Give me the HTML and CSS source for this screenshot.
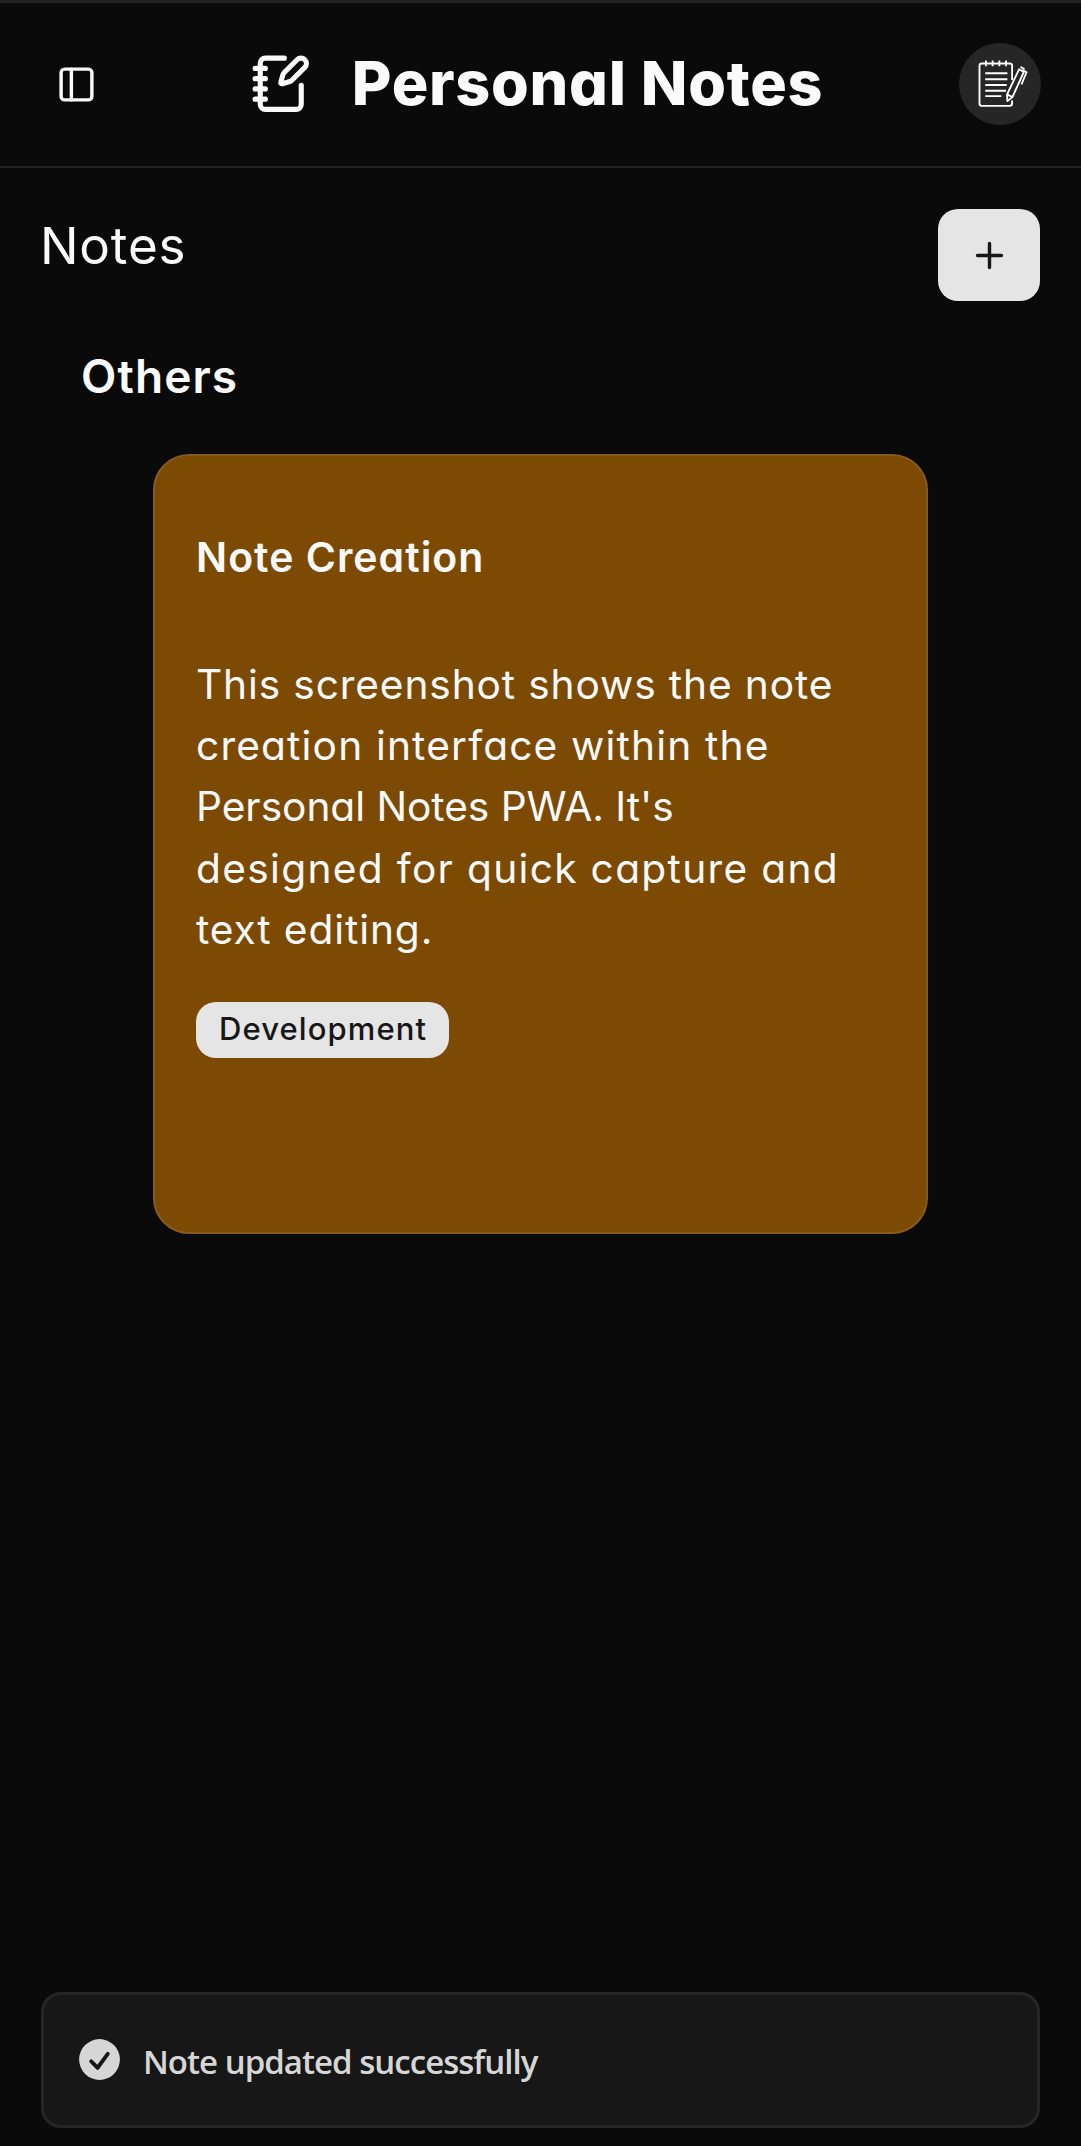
FILE: index.html
```html
<!DOCTYPE html>
<html lang="en">
<head>
  <meta charset="utf-8">
  <title>Personal Notes</title>
  <link rel="stylesheet" href="styles.css">
</head>
<body>
  <div class="app">
    <header class="topbar">
      <button class="icon-button" aria-label="Toggle sidebar">
        <svg class="icon" viewBox="0 0 24 24"><rect x="3" y="3" width="18" height="18" rx="2"/><path d="M9 3v18"/></svg>
      </button>
      <div class="brand">
        <svg class="icon brand-icon" viewBox="0 0 24 24">
          <path d="M13.4 2H6a2 2 0 0 0-2 2v16a2 2 0 0 0 2 2h12a2 2 0 0 0 2-2v-7.4"/>
          <path d="M2 6h4M2 10h4M2 14h4M2 18h4"/>
          <path d="M21.378 5.626a1 1 0 1 0-3.004-3.004l-5.01 5.012a2 2 0 0 0-.506.854l-.837 2.87a.5.5 0 0 0 .62.62l2.87-.837a2 2 0 0 0 .854-.506z"/>
        </svg>
        <h1 class="brand-title">Personal Notes</h1>
      </div>
      <div class="avatar">
        <svg class="avatar-art" viewBox="57 41 244 244">
          <path d="M215 151V109q0-7-7-7H125q-7 0-7 7V221q0 7 7 7H208q7 0 7-7V212"/>
          <path d="M137 93V110M157 93V110M177 93V110M197 93V110"/>
          <path d="M135 131H201M135 149H201M135 166H199M135 183H197M135 199H183"/>
          <path d="M236 119L250 127L216 202L201 214L200 194Z"/>
          <path d="M200 194L216 202M240 112L252 119M248 122L258 128L243 164"/>
        </svg>
      </div>
    </header>

    <main class="content">
      <div class="page-head">
        <h2 class="page-title">Notes</h2>
        <button class="add-button" aria-label="Add note">
          <svg class="icon" viewBox="0 0 24 24"><path d="M5 12h14M12 5v14"/></svg>
        </button>
      </div>
      <h3 class="section-title">Others</h3>
      <article class="note">
        <h4 class="note-title">Note Creation</h4>
        <p class="note-body">
          <span class="line line-1">This screenshot shows the note</span>
          <span class="line line-2">creation interface within the</span>
          <span class="line line-3">Personal Notes PWA. It's</span>
          <span class="line line-4">designed for quick capture and</span>
          <span class="line line-5">text editing.</span>
        </p>
        <span class="tag">Development</span>
      </article>
    </main>

    <div class="toast" role="status">
      <svg class="toast-icon" viewBox="0 0 20 20"><path fill-rule="evenodd" clip-rule="evenodd" d="M10 18a8 8 0 100-16 8 8 0 000 16zm3.857-9.809a.75.75 0 00-1.214-.882l-3.483 4.79-1.88-1.88a.75.75 0 10-1.06 1.061l2.5 2.5a.75.75 0 001.137-.089l4-5.5z"/></svg>
      <span class="toast-text">Note updated successfully</span>
    </div>
  </div>
</body>
</html>
```
FILE: styles.css
```css
* { box-sizing: border-box; margin: 0; }

body {
  background: #0a0a0a;
  color: #fafafa;
  font-family: Inter, "Liberation Sans", sans-serif;
  font-feature-settings: "cv11";
}

button { border: 0; padding: 0; background: none; color: inherit; }

.app {
  display: flex;
  flex-direction: column;
  height: 2146px;
  padding-bottom: 18px;
}

.icon {
  display: block;
  width: 41px;
  height: 41px;
  fill: none;
  stroke: currentColor;
  stroke-width: 2;
  stroke-linecap: round;
  stroke-linejoin: round;
}

.topbar {
  display: flex;
  align-items: center;
  justify-content: space-between;
  height: 168px;
  padding: 0 40.5px 1px 41px;
  border-top: 3px solid #222;
  border-bottom: 2px solid #222;
}

.icon-button {
  display: flex;
  align-items: center;
  justify-content: center;
  width: 71px;
  height: 71px;
}

.brand { display: flex; align-items: center; gap: 40px; margin-left: 3px; }
.brand-icon { width: 61.5px; height: 61.5px; }

.brand-title {
  font-size: 61px;
  font-weight: 800;
  line-height: 72px;
  letter-spacing: 0.74px;
  padding-bottom: 2px;
  white-space: nowrap;
}

.avatar {
  width: 82px;
  height: 82px;
  border-radius: 50%;
  background: #262626;
}

.avatar-art {
  display: block;
  width: 82px;
  height: 82px;
  fill: none;
  stroke: #fff;
  stroke-width: 5.5;
  stroke-linejoin: round;
}

.content { flex: 1; padding: 41px 41px 0; }

.page-head { display: flex; align-items: flex-start; justify-content: space-between; }

.page-title {
  margin-left: -1px;
  font-size: 51.2px;
  font-weight: 400;
  line-height: 72px;
  letter-spacing: 0.8px;
}

.add-button {
  display: flex;
  align-items: center;
  justify-content: center;
  width: 102px;
  height: 92px;
  border-radius: 20px;
  background: #e5e5e5;
  color: #171717;
}

.section-title {
  margin: 39px 0 0 40px;
  font-size: 46px;
  font-weight: 600;
  line-height: 72px;
  letter-spacing: 1.1px;
}

.note {
  width: 775px;
  height: 780px;
  margin: 42px 0 0 112px;
  padding: 72px 41px;
  border: 2px solid #875a1f;
  border-radius: 36px;
  background: #7c4a03;
}

.note-title {
  font-size: 41px;
  font-weight: 600;
  line-height: 58px;
  letter-spacing: 1px;
}

.note-body {
  margin-top: 68px;
  font-size: 40.7px;
  line-height: 61.2px;
}

.line { display: block; white-space: nowrap; }
.line-1 { letter-spacing: 0.853px; }
.line-2 { letter-spacing: 1.15px; }
.line-3 { letter-spacing: -0.06px; }
.line-4 { letter-spacing: 1.3px; }
.line-5 { letter-spacing: 0.876px; }

.tag {
  display: block;
  width: 253px;
  height: 56px;
  margin-top: 42px;
  padding-left: 23px;
  border-radius: 20px;
  background: #e5e5e5;
  color: #171717;
  font-size: 31px;
  font-weight: 500;
  line-height: 54px;
  letter-spacing: 1.1px;
}

.toast {
  display: flex;
  align-items: center;
  gap: 18px;
  height: 136px;
  margin: 0 41px;
  padding-left: 30px;
  border: 3px solid #262626;
  border-radius: 20px;
  background: #171717;
  color: #d6d6d6;
}

.toast-icon { width: 51px; height: 51px; margin-top: -2px; fill: currentColor; }

.toast-text {
  padding-top: 3px;
  font-family: "Open Sans", sans-serif;
  font-size: 33px;
  font-weight: 600;
  letter-spacing: -0.98px;
  white-space: nowrap;
}
```
